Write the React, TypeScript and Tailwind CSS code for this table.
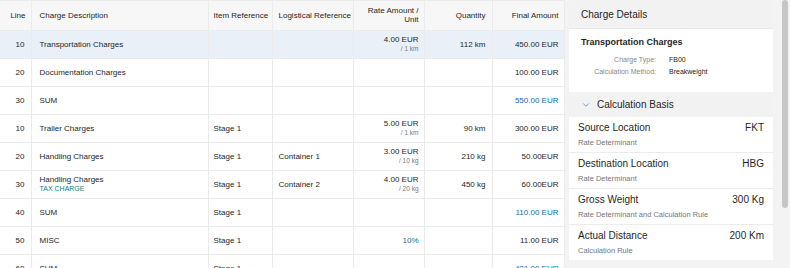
import React from 'react';
import { ChevronDown } from 'lucide-react';

interface ChargeRow {
  line: string;
  desc: string;
  tag?: string;
  item?: string;
  logistic?: string;
  rate?: string;
  per?: string;
  rateBlue?: boolean;
  qty?: string;
  amount: string;
  sum?: boolean;
  selected?: boolean;
}

const rows: ChargeRow[] = [
  { line: '10', desc: 'Transportation Charges', rate: '4.00 EUR', per: '/ 1 km', qty: '112 km', amount: '450.00 EUR', selected: true },
  { line: '20', desc: 'Documentation Charges', amount: '100.00 EUR' },
  { line: '30', desc: 'SUM', amount: '550.00 EUR', sum: true },
  { line: '10', desc: 'Trailer Charges', item: 'Stage 1', rate: '5.00 EUR', per: '/ 1 km', qty: '90 km', amount: '300.00 EUR' },
  { line: '20', desc: 'Handling Charges', item: 'Stage 1', logistic: 'Container 1', rate: '3.00 EUR', per: '/ 10 kg', qty: '210 kg', amount: '50.00EUR' },
  { line: '30', desc: 'Handling Charges', tag: 'TAX CHARGE', item: 'Stage 1', logistic: 'Container 2', rate: '4.00 EUR', per: '/ 20 kg', qty: '450 kg', amount: '60.00EUR' },
  { line: '40', desc: 'SUM', item: 'Stage 1', amount: '110.00 EUR', sum: true },
  { line: '50', desc: 'MISC', item: 'Stage 1', rate: '10%', rateBlue: true, amount: '11.00 EUR' },
  { line: '60', desc: 'SUM', item: 'Stage 1', amount: '421.00 EUR', sum: true },
];

const basis = [
  { label: 'Source Location', value: 'FKT', note: 'Rate Determinant' },
  { label: 'Destination Location', value: 'HBG', note: 'Rate Determinant' },
  { label: 'Gross Weight', value: '300 Kg', note: 'Rate Determinant and Calculation Rule' },
  { label: 'Actual Distance', value: '200 Km', note: 'Calculation Rule' },
];

const cell = 'border-r border-b border-[#ebebeb] align-middle';

const App: React.FC = () => {
  return (
    <div
      className="flex h-[268px] w-[790px] overflow-hidden bg-[#f3f3f3] text-[#262626]"
      style={{ fontFamily: '"Liberation Sans", Arial, sans-serif' }}
    >
      {/* charges table */}
      <div className="w-[564px] shrink-0 bg-white border-t border-[#ebebeb]">
        <table className="w-[564px] table-fixed border-collapse text-[8px] leading-[9px]">
          <colgroup>
            <col className="w-[31px]" />
            <col className="w-[177px]" />
            <col className="w-[64px]" />
            <col className="w-[81px]" />
            <col className="w-[71px]" />
            <col className="w-[68px]" />
            <col className="w-[72px]" />
          </colgroup>
          <thead>
            <tr className="h-[29px] bg-[#f7f7f7]">
              <th className={`${cell} font-normal text-right pr-[5px]`}>Line</th>
              <th className={`${cell} font-normal text-left pl-[8px]`}>Charge Description</th>
              <th className={`${cell} font-normal text-left pl-[5px]`}>Item Reference</th>
              <th className={`${cell} font-normal text-left pl-[6px]`}>Logistical Reference</th>
              <th className={`${cell} font-normal text-right pr-[5px]`}>
                Rate Amount /<br />Unit
              </th>
              <th className={`${cell} font-normal text-right pr-[6px]`}>Quantity</th>
              <th className={`${cell} font-normal text-right pr-[5px]`}>Final Amount</th>
            </tr>
          </thead>
          <tbody>
            {rows.map((r, i) => (
              <tr key={i} className={`h-[28px] ${r.selected ? 'bg-[#e9f0f7]' : ''}`}>
                <td className={`${cell} text-right pr-[6px]`}>{r.line}</td>
                <td className={`${cell} pl-[8px]`}>
                  <div>{r.desc}</div>
                  {r.tag && <div className="text-[7px] text-[#16807a]">{r.tag}</div>}
                </td>
                <td className={`${cell} pl-[5px]`}>{r.item}</td>
                <td className={`${cell} pl-[6px]`}>{r.logistic}</td>
                <td className={`${cell} text-right pr-[5px]`}>
                  {r.rate && (
                    <div className={r.rateBlue ? 'text-[#0a6ea9]' : ''}>{r.rate}</div>
                  )}
                  {r.per && <div className="text-[6.5px] text-[#777]">{r.per}</div>}
                </td>
                <td className={`${cell} text-right pr-[6px]`}>{r.qty}</td>
                <td className={`${cell} text-right pr-[5px] ${r.sum ? 'text-[#0a6ea9]' : ''}`}>
                  {r.amount}
                </td>
              </tr>
            ))}
          </tbody>
        </table>
      </div>

      {/* details panel */}
      <div className="ml-[5px] mt-[1px] w-[204px] shrink-0">
        <div className="h-[28px] flex items-center pl-[12px] bg-[#f2f2f2] text-[10px] border-b border-[#e8e8e8]">
          Charge Details
        </div>
        <div className="h-[63px] bg-white pl-[12px] pt-[8px]">
          <div className="font-bold text-[9px] leading-[11px] text-[#1f1f1f]">Transportation Charges</div>
          <div className="mt-[7px] grid grid-cols-[75px_1fr] gap-x-[13px] gap-y-[3px] text-[7px] leading-[9px]">
            <span className="text-right text-[#888]">Charge Type:</span>
            <span>FB00</span>
            <span className="text-right text-[#888]">Calculation Method:</span>
            <span>Breakweight</span>
          </div>
        </div>
        <div className="h-[25px] flex items-center gap-[6px] pl-[12px] bg-[#f2f2f2] text-[10px]">
          <ChevronDown size={10} strokeWidth={1.5} className="text-[#0a6ea9]" />
          <span>Calculation Basis</span>
        </div>
        <div className="flex flex-col gap-[1px] bg-[#ececec]">
          {basis.map((b) => (
            <div key={b.label} className="h-[35px] bg-white px-[9px] pt-[5px]">
              <div className="flex justify-between text-[10px] leading-[12px] text-[#1f1f1f]">
                <span>{b.label}</span>
                <span>{b.value}</span>
              </div>
              <div className="mt-[4px] text-[7.5px] leading-[9px] text-[#777]">{b.note}</div>
            </div>
          ))}
        </div>
      </div>

      {/* scrollbar */}
      <div className="ml-auto mr-[1px] w-[8px] flex justify-center">
        <div className="w-[6px] h-[208px] rounded-[3px] bg-[#c6c6c6]" />
      </div>
    </div>
  );
};

export default App;
